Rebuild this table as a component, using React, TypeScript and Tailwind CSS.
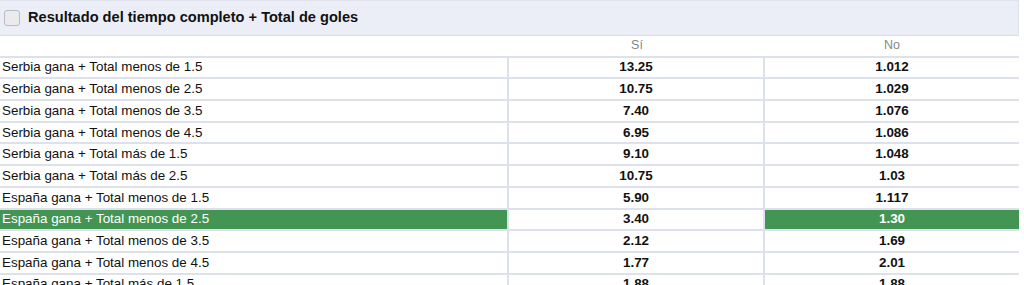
import React from "react";

const rows: [string, string, string, number?][] = [
  ["Serbia gana + Total menos de 1.5", "13.25", "1.012"],
  ["Serbia gana + Total menos de 2.5", "10.75", "1.029"],
  ["Serbia gana + Total menos de 3.5", "7.40", "1.076"],
  ["Serbia gana + Total menos de 4.5", "6.95", "1.086"],
  ["Serbia gana + Total más de 1.5", "9.10", "1.048"],
  ["Serbia gana + Total más de 2.5", "10.75", "1.03"],
  ["España gana + Total menos de 1.5", "5.90", "1.117"],
  ["España gana + Total menos de 2.5", "3.40", "1.30", 1],
  ["España gana + Total menos de 3.5", "2.12", "1.69"],
  ["España gana + Total menos de 4.5", "1.77", "2.01"],
  ["España gana + Total más de 1.5", "1.88", "1.88"],
];

export default function App() {
  return (
    <div className="w-[1024px] h-[285px] overflow-hidden bg-white" style={{ fontFamily: '"Liberation Sans", Arial, sans-serif' }}>
      <div className="w-[1019px] border-t border-r border-[#dfe2ec]">
        <div className="h-[35px] bg-[#eceef7] flex items-center border-b border-[#d9dde8]">
          <div className="ml-[4px] w-[16px] h-[16px] rounded-[3px] border border-[#b9bcc4] bg-[#ebebed]" />
          <div className="ml-[8px] text-[14.6px] font-bold text-[#111]">Resultado del tiempo completo + Total de goles</div>
        </div>
        <div className="grid grid-cols-[507px_254px_254px] gap-[2px] bg-[#dde1eb] text-[13.4px] text-[#111]">
          <div className="col-span-3 bg-white h-[19.7px] grid grid-cols-[509px_256px_254px]">
            <div />
            <div className="flex items-center justify-center text-[12.5px] text-[#888]">Sí</div>
            <div className="flex items-center justify-center text-[12.5px] text-[#888]">No</div>
          </div>
          {rows.map(([label, si, no, hl], i) => (
            <React.Fragment key={i}>
              <div className={`h-[19.7px] flex items-center pl-[2px] ${hl ? "bg-[#439553] text-white" : "bg-white"}`}>{label}</div>
              <div className="h-[19.7px] flex items-center justify-center font-bold bg-white">{si}</div>
              <div className={`h-[19.7px] flex items-center justify-center font-bold ${hl ? "bg-[#439553] text-white" : "bg-white"}`}>{no}</div>
            </React.Fragment>
          ))}
        </div>
      </div>
    </div>
  );
}
